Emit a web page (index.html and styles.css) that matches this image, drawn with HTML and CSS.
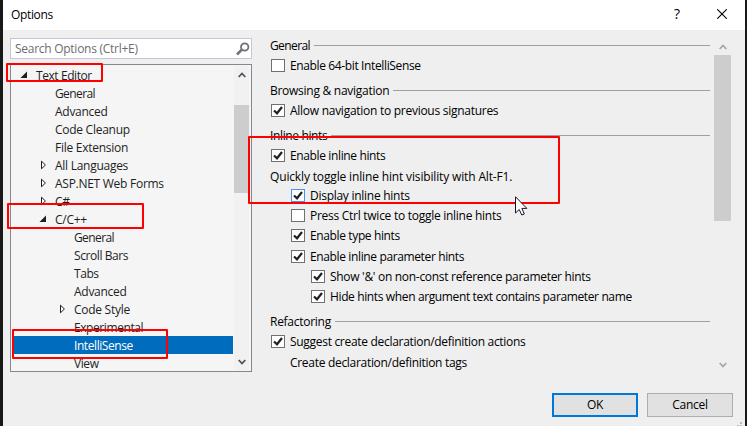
FILE: index.html
```
<!DOCTYPE html>
<html lang="en">
<head>
<meta charset="utf-8">
<title>Options</title>
<link rel="stylesheet" href="styles.css">
</head>
<body>
<svg class="defs" width="0" height="0">
  <symbol id="check" viewBox="0 0 14 13"><path d="M3 6.5 L6 9.3 L11 3" fill="none" stroke="#212121" stroke-width="2.2"/></symbol>
  <symbol id="open" viewBox="0 0 8 8"><path d="M7 0.5V7H0.5Z" fill="#1e1e1e"/></symbol>
  <symbol id="closed" viewBox="0 0 8 10"><path d="M1.5 1.2V8.8L5.4 5Z" fill="#fff" stroke="#1e1e1e"/></symbol>
  <symbol id="up" viewBox="0 0 8 6"><path d="M0.7 5L4 1.5L7.3 5" fill="none" stroke="currentColor" stroke-width="1.8"/></symbol>
  <symbol id="down" viewBox="0 0 8 6"><path d="M0.7 1L4 4.5L7.3 1" fill="none" stroke="currentColor" stroke-width="1.8"/></symbol>
</svg>
<div class="dialog">
  <header class="titlebar">
    <span class="title">Options</span>
    <span class="help">?</span>
    <svg class="close" width="10" height="10"><path d="M0.3 0.3L9.7 9.7M9.7 0.3L0.3 9.7" stroke="#000" stroke-width="1.1"/></svg>
  </header>
  <main class="content">
    <section class="left">
      <div class="search"><span>Search Options (Ctrl+E)</span>
        <svg width="14" height="14"><circle cx="8.7" cy="5" r="3.7" fill="none" stroke="#717171" stroke-width="1.8"/><path d="M5.8 7.7L1 12.5" stroke="#717171" stroke-width="2.6"/></svg>
      </div>
      <div class="tree">
        <ul class="nodes">
          <li class="l0"><svg class="open"><use href="#open"/></svg><span class="tight">Text Editor</span></li>
          <li class="l1"><span class="tighter">General</span></li>
          <li class="l1"><span>Advanced</span></li>
          <li class="l1"><span>Code Cleanup</span></li>
          <li class="l1"><span>File Extension</span></li>
          <li class="l1"><svg class="closed"><use href="#closed"/></svg><span>All Languages</span></li>
          <li class="l1"><svg class="closed"><use href="#closed"/></svg><span>ASP.NET Web Forms</span></li>
          <li class="l1"><svg class="closed"><use href="#closed"/></svg><span>C#</span></li>
          <li class="l1"><svg class="open"><use href="#open"/></svg><span>C/C++</span></li>
          <li class="l2"><span class="tighter">General</span></li>
          <li class="l2"><span class="tight">Scroll Bars</span></li>
          <li class="l2"><span class="tight">Tabs</span></li>
          <li class="l2"><span>Advanced</span></li>
          <li class="l2"><svg class="closed"><use href="#closed"/></svg><span>Code Style</span></li>
          <li class="l2"><span class="tight">Experimental</span></li>
          <li class="l2 selected"><span class="tight">IntelliSense</span></li>
          <li class="l2"><span class="tight">View</span></li>
        </ul>
        <div class="treescroll">
          <svg class="arrow"><use href="#up"/></svg>
          <div class="thumb"></div>
          <svg class="arrow"><use href="#down"/></svg>
        </div>
      </div>
    </section>
    <section class="options">
      <h2><span class="tighter">General</span></h2>
      <label class="row"><i class="box"></i><span class="snug">Enable 64-bit IntelliSense</span></label>
      <h2><span>Browsing &amp; navigation</span></h2>
      <label class="row"><svg class="box"><use href="#check"/></svg><span>Allow navigation to previous signatures</span></label>
      <h2><span class="snug">Inline hints</span></h2>
      <label class="row"><svg class="box"><use href="#check"/></svg><span class="snug">Enable inline hints</span></label>
      <p class="row note"><span class="loose">Quickly toggle inline hint visibility with Alt-F1.</span></p>
      <label class="row in1"><svg class="box hot"><use href="#check"/></svg><span>Display inline hints</span></label>
      <label class="row in1"><i class="box"></i><span>Press Ctrl twice to toggle inline hints</span></label>
      <label class="row in1"><svg class="box"><use href="#check"/></svg><span class="snug">Enable type hints</span></label>
      <label class="row in1 lower"><svg class="box"><use href="#check"/></svg><span class="snug">Enable inline parameter hints</span></label>
      <label class="row in2"><svg class="box"><use href="#check"/></svg><span class="close-set">Show '&amp;' on non-const reference parameter hints</span></label>
      <label class="row in2"><svg class="box"><use href="#check"/></svg><span class="snug">Hide hints when argument text contains parameter name</span></label>
      <h2><span>Refactoring</span></h2>
      <label class="row"><svg class="box"><use href="#check"/></svg><span class="close-set">Suggest create declaration/definition actions</span></label>
      <p class="row in1 lower"><span class="close-set">Create declaration/definition tags</span></p>
    </section>
    <div class="pagescroll">
      <svg class="arrow"><use href="#up"/></svg>
      <div class="thumb"></div>
      <svg class="arrow"><use href="#down"/></svg>
    </div>
  </main>
  <footer class="buttons">
    <button class="ok">OK</button>
    <button>Cancel</button>
  </footer>
  <svg class="grip" width="8" height="8"><path d="M5 0h2v2h-2zM5 3h2v2h-2zM2 3h2v2h-2z" fill="#bbb"/></svg>
</div>
<div class="mark mark-editor"></div>
<div class="mark mark-cpp"></div>
<div class="mark mark-sense"></div>
<div class="mark mark-hints"></div>
<svg class="cursor" width="13" height="20"><path d="M0.5 0.8V17L4.2 13.5L6.8 19L9.3 18L6.9 12.4H11.8Z" fill="#fff" stroke="#151525"/></svg>
</body>
</html>
```
FILE: styles.css
```
* { box-sizing: border-box; }
body {
  margin: 0; width: 747px; height: 426px; overflow: hidden; position: relative;
  background: #181818; padding: 0 2px 0 3px;
  font: 12px/18px "Open Sans", "Noto Sans", sans-serif; color: #000;
  letter-spacing: -0.27px;
}
.defs { position: absolute; }
.dialog { height: 426px; background: #efefef; position: relative; }
.titlebar { height: 30px; background: #fff; display: flex; align-items: center; padding: 0 18px 2px 8px; }
.title { flex: 1; padding-top: 2px; letter-spacing: -0.35px; }
.help { font-size: 14px; width: 6px; margin-right: 37px; }
.content { display: flex; height: 349px; }
.left { width: 242px; margin: 8px 0 0 7px; }
.search {
  height: 21px; border: 1px solid #c5c7d9; background: #fff; color: #6d6d6d;
  display: flex; justify-content: space-between; align-items: center; padding: 0 1px 0 4px;
}
.tree { height: 308px; margin-top: 5px; border: 1px solid #828790; background: #f5f5f5; display: flex; padding: 1px 2px 1px 3px; }
.nodes { list-style: none; margin: 0; padding: 0; width: 219px; flex: none; height: 304px; overflow: hidden; color: #1e1e1e; }
.nodes li { height: 18px; display: flex; align-items: center; }
.nodes span, .row span, h2 span { padding-top: 1px; margin-bottom: -1px; }
.nodes .l0 { padding-left: 22px; }
.nodes .l1 { padding-left: 41px; }
.nodes .l2 { padding-left: 60px; }
.nodes svg { margin-left: -15px; margin-right: 7px; width: 8px; height: 10px; }
.nodes .open { height: 8px; margin-left: -16px; margin-right: 8px; }
.nodes .selected { background: #006cbe; color: #fff; }
.treescroll { width: 15px; margin-left: 1px; background: #f1f1f1; color: #505050; display: flex; flex-direction: column; align-items: center; padding: 6px 0 5px; }
.arrow { width: 8px; height: 6px; flex: none; }
.thumb { background: #cdcdcd; }
.treescroll .thumb { width: 15px; height: 88px; margin: 27px 0 auto; }
.options { width: 442px; margin-left: 18px; padding-top: 5px; }
h2 { margin: 5px 0 0; height: 20px; font: inherit; line-height: 20px; display: flex; align-items: center; }
h2:first-child { margin-top: 0; }
h2::after { content: ""; flex: 1; height: 1px; background: #a0a0a0; margin: 1px 2px 0 4px; }
.row { display: flex; align-items: center; height: 20px; margin: 0; line-height: 20px; white-space: nowrap; }
.note { margin: 1px 0 -1px; }
.lower { margin-top: 1px; }
.in1 { padding-left: 20px; }
.in2 { padding-left: 40px; }
.loose { letter-spacing: -0.15px; }
.close-set { letter-spacing: -0.3px; }
.snug { letter-spacing: -0.37px; }
.tight { letter-spacing: -0.42px; }
.tighter { letter-spacing: -0.6px; }
.box { width: 14px; height: 13px; flex: none; background: #fff; box-shadow: inset 0 0 0 1px #707070; margin: 0 5px 0 1px; }
.hot { box-shadow: inset 0 0 0 1px #4a90f0; }
.pagescroll { width: 17px; margin: 14px 0 0 2px; color: #a6a6a6; display: flex; flex-direction: column; align-items: center; height: 324px; }
.pagescroll .thumb { width: 17px; height: 166px; margin: 5px 0 auto; }
.buttons { display: flex; justify-content: flex-end; gap: 9px; padding: 14px 12px 0 0; }
.buttons button { width: 86px; height: 24px; padding: 0; border: 1px solid #adadad; background: #e1e1e1; font: inherit; letter-spacing: inherit; color: #000; }
.buttons .ok { border: 2px solid #0078d7; }
.grip { position: absolute; right: 2px; bottom: -4px; }
.mark { position: absolute; border: 2px solid #ff0000; border-radius: 1px; }
.mark-editor { left: 6px; top: 63px; width: 97px; height: 19px; }
.mark-cpp { left: 7px; top: 203px; width: 137px; height: 26px; }
.mark-sense { left: 12px; top: 329px; width: 156px; height: 30px; }
.mark-hints { left: 248px; top: 136px; width: 312px; height: 68px; }
.cursor { position: absolute; left: 515px; top: 196px; }
```
